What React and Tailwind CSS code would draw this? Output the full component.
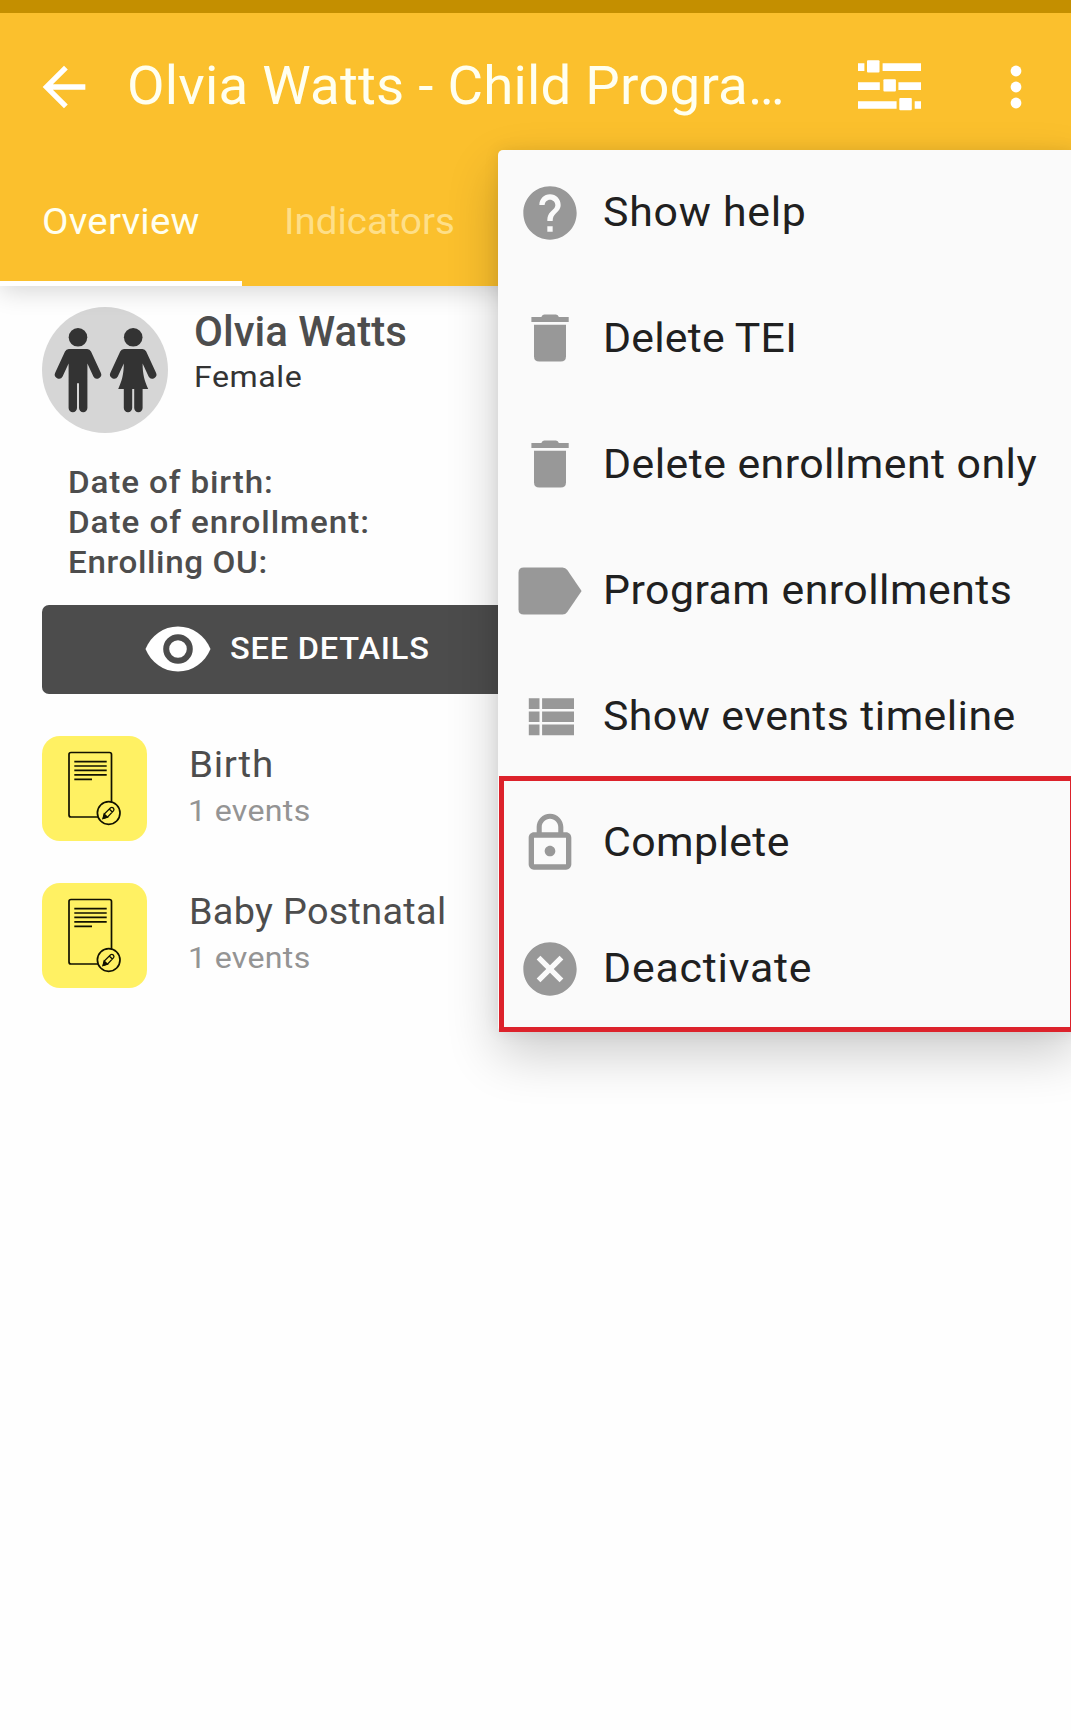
function BackIcon() {
  return (
    <svg viewBox="0 0 24 24" className="size-16 fill-white">
      <path d="M20 11H7.83l5.59-5.59L12 4l-8 8 8 8 1.41-1.41L7.83 13H20v-2z" />
    </svg>
  );
}

function TuneIcon() {
  return (
    <svg viewBox="0 0 63 51" className="h-[51px] w-[63px] fill-white">
      <path d="M0 3.3h6.4V11H0zM24.6 3.3H63V11H24.6zM0 22.3h21.8V30H0zM40.4 22.3H63V30H40.4zM0 41.2h38.6v7.6H0zM56.7 41.2H63v7.6h-6.3z" />
      <rect x="9" y="0.2" width="12.5" height="12.2" rx="1" />
      <rect x="25.4" y="19.2" width="12.5" height="12.2" rx="1" />
      <rect x="41.3" y="38.1" width="12.5" height="12.2" rx="1" />
    </svg>
  );
}

function MoreIcon() {
  return (
    <svg viewBox="0 0 64 64" className="size-16 fill-white">
      <circle cx="32" cy="16" r="5.4" />
      <circle cx="32" cy="32" r="5.4" />
      <circle cx="32" cy="48" r="5.4" />
    </svg>
  );
}

function PeopleIcon() {
  return (
    <svg viewBox="0 0 126 126" className="size-[126px] shrink-0 fill-[#333333]">
      <circle cx="63" cy="63" r="63" className="fill-[#d6d6d6]" />
      <circle cx="36" cy="30.3" r="9.3" />
      <path d="M26.8 42H45.2Q47.8 42 49 44.5L58.7 65.6A4.1 4.1 0 0 1 51.4 69.4L45.4 56.5V101A4.1 4.1 0 0 1 37 101V76.3H35V101A4.1 4.1 0 0 1 26.6 101V56.5L20.6 69.4A4.1 4.1 0 0 1 13.3 65.6L23 44.5Q24.2 42 26.8 42Z" />
      <circle cx="91.2" cy="30.3" r="9.3" />
      <path d="M82 42H100.4Q103 42 104.2 44.5L113.9 65.6A4.1 4.1 0 0 1 106.6 69.4L100.6 56.5C100.6 67 102.5 74 106.2 82H100.6V101A4.1 4.1 0 0 1 92.2 101V82H90.2V101A4.1 4.1 0 0 1 81.8 101V82H76.2C79.9 74 81.8 67 81.8 56.5L75.8 69.4A4.1 4.1 0 0 1 68.5 65.6L78.2 44.5Q79.4 42 82 42Z" />
    </svg>
  );
}

function EyeIcon() {
  return (
    <svg viewBox="0 0 66 46" className="h-[46px] w-[66px] shrink-0">
      <path d="M0.5 23C6 9.5 18.5 0.5 33 0.5S60 9.5 65.5 23C60 36.5 47.5 45.5 33 45.5S6 36.5 0.5 23Z" fill="#fff" />
      <circle cx="33" cy="23" r="11.8" fill="#fff" stroke="#4c4c4c" strokeWidth="6" />
    </svg>
  );
}

function DocIcon() {
  return (
    <svg viewBox="0 0 105 105" className="size-[105px]" fill="none" stroke="#111100" strokeWidth="1.7">
      <rect x="27" y="16.5" width="42.5" height="64.5" rx="2" />
      <path d="M32.3 25.7H64.7M32.3 30H64.7M32.3 34.4H64.7M32.3 38.8H64.7M32.3 43.3H50" />
      <circle cx="66.7" cy="77" r="11.3" className="fill-[#fff163]" />
      <path d="M61.3 82.3L62.5 77.8L68.6 71.7Q70 70.8 71.3 72Q72.5 73.3 71.6 74.7L65.7 80.9ZM67.3 73L70.3 76" strokeWidth="1.3" />
      <path d="M61.3 82.3L62.3 78.5L65 81.2Z" fill="#111100" />
    </svg>
  );
}

function HelpIcon() {
  return (
    <svg viewBox="0 0 24 24" className="size-16 fill-[#989898]">
      <path d="M12 2C6.48 2 2 6.48 2 12s4.48 10 10 10 10-4.48 10-10S17.52 2 12 2zm1 17h-2v-2h2v2zm2.07-7.75l-.9.92C13.45 12.9 13 13.5 13 15h-2v-.5c0-1.1.45-2.1 1.17-2.83l1.24-1.26c.37-.36.59-.86.59-1.41 0-1.1-.9-2-2-2s-2 .9-2 2H8c0-2.21 1.79-4 4-4s4 1.79 4 4c0 .88-.36 1.68-.93 2.25z" />
    </svg>
  );
}

function TrashIcon() {
  return (
    <svg viewBox="0 0 64 64" className="size-16 fill-[#989898]">
      <path d="M13.4 15V9.9H23.3Q24.5 7.5 26.5 7.5H37.7Q39.7 7.5 40.9 9.9H50.7V15Z" />
      <path d="M16 17.7H48V49.2Q48 54.5 42.7 54.5H21.3Q16 54.5 16 49.2Z" />
    </svg>
  );
}

function LabelIcon() {
  return (
    <svg viewBox="0 0 64 64" className="size-16 fill-[#989898]">
      <path d="M5.8 8.5H44.5Q47.5 8.5 49.3 11L63.6 32L49.3 53Q47.5 55.5 44.5 55.5H5.8Q0.5 55.5 0.5 50.2V13.8Q0.5 8.5 5.8 8.5Z" />
    </svg>
  );
}

function ListIcon() {
  return (
    <svg viewBox="0 0 64 64" className="size-16 fill-[#989898]">
      <path d="M10.8 13.3h10.7v10.7H10.8zM10.8 26.4h10.7v10.7H10.8zM10.8 39.6h10.7v10.7H10.8zM24.1 13.3H56v10.7H24.1zM24.1 26.4H56v10.7H24.1zM24.1 39.6H56v10.7H24.1z" />
    </svg>
  );
}

function LockIcon() {
  return (
    <svg viewBox="0 0 24 24" className="size-16 fill-[#989898]">
      <path d="M12 17c1.1 0 2-.9 2-2s-.9-2-2-2-2 .9-2 2 .9 2 2 2zm6-9h-1V6c0-2.76-2.24-5-5-5S7 3.24 7 6v2H6c-1.1 0-2 .9-2 2v10c0 1.1.9 2 2 2h12c1.1 0 2-.9 2-2V10c0-1.1-.9-2-2-2zM8.9 6c0-1.71 1.39-3.1 3.1-3.1s3.1 1.39 3.1 3.1v2H8.9V6zM18 20H6V10h12v10z" />
    </svg>
  );
}

function CancelIcon() {
  return (
    <svg viewBox="0 0 24 24" className="size-16 fill-[#989898]">
      <path d="M12 2C6.47 2 2 6.47 2 12s4.47 10 10 10 10-4.47 10-10S17.53 2 12 2zm5 13.59L15.59 17 12 13.41 8.41 17 7 15.59 10.59 12 7 8.41 8.41 7 12 10.59 15.59 7 17 8.41 13.41 12 17 15.59z" />
    </svg>
  );
}

const menuItems = [
  { label: "Show help", Icon: HelpIcon, tracking: "tracking-[0.7px]" },
  { label: "Delete TEI", Icon: TrashIcon, tracking: "tracking-[0.2px]" },
  { label: "Delete enrollment only", Icon: TrashIcon, tracking: "tracking-[0.43px]" },
  { label: "Program enrollments", Icon: LabelIcon, tracking: "tracking-[0.45px]" },
  { label: "Show events timeline", Icon: ListIcon, tracking: "tracking-[0.41px]" },
  { label: "Complete", Icon: LockIcon, tracking: "tracking-[0.37px]" },
  { label: "Deactivate", Icon: CancelIcon, tracking: "tracking-[0.75px]" },
];

const stages = [
  { name: "Birth", style: "scale-x-[1.07] tracking-[0.7px]" },
  { name: "Baby Postnatal", style: "scale-x-[1.05] tracking-[0.3px]" },
];

function Header() {
  return (
    <header className="relative h-[286px] bg-[#fbc02d] text-[#fffff0] shadow-[0_5px_24px_rgba(0,0,0,0.16)]">
      <div className="h-[13px] bg-[#c48f00]" />
      <div className="flex h-[145px] items-center pl-8">
        <div className="mt-[2px]"><BackIcon /></div>
        <h1 className="ml-[31px] w-[731px] origin-left scale-x-[1.03] whitespace-nowrap text-[53px] leading-[60px] tracking-[0.23px]">
          Olvia Watts - Child Progra…
        </h1>
        <TuneIcon />
        <div className="ml-[63px] mt-[2px]"><MoreIcon /></div>
      </div>
      <nav className="flex h-32 text-[37px] leading-[127px]">
        <div className="w-[242px] border-b-[5px] border-white pl-[42px]">
          <span className="inline-block origin-left scale-x-[1.04] tracking-[0.2px]">Overview</span>
        </div>
        <div className="pl-[42px] text-[#fedf88]">
          <span className="inline-block origin-left scale-x-[1.04]">Indicators</span>
        </div>
      </nav>
    </header>
  );
}

function Menu() {
  return (
    <div className="absolute left-[498px] top-[150px] w-[579px] rounded-[5px] bg-[#fafafa] shadow-[0_22px_52px_rgba(0,0,0,0.2),0_0_16px_rgba(0,0,0,0.08)]">
      {menuItems.map(({ label, Icon, tracking }) => (
        <div key={label} className="flex h-[126px] items-center pl-5 first:pb-[1px]">
          <Icon />
          <span className={`ml-[21px] origin-left scale-x-[1.07] whitespace-nowrap text-[40px] leading-[48px] text-[#202020] ${tracking}`}>{label}</span>
        </div>
      ))}
      <div className="absolute left-[1px] top-[626px] h-[256px] w-[576px] border-[5px] border-[#dc222b]" />
    </div>
  );
}

export default function App() {
  return (
    <div className="relative h-[1730px] w-[1071px] overflow-hidden bg-[#fefefe] font-['Roboto',sans-serif]">
      <Header />
      <main className="px-[42px] pt-[21px]">
        <section className="flex">
          <PeopleIcon />
          <div className="ml-[26px] pt-[2px]">
            <h2 className="text-[42px] font-medium leading-[46px] text-[#4d4d4d]">Olvia Watts</h2>
            <p className="origin-left scale-x-[1.07] text-[30px] leading-[44px] tracking-[0.52px] text-[#333333]">Female</p>
          </div>
        </section>
        <section className="mt-[30px] pl-[26px] text-[31px] font-medium leading-[40px] text-[#4d4d4d]">
          <p className="origin-left scale-x-[1.07] tracking-[0.83px]">Date of birth:</p>
          <p className="origin-left scale-x-[1.07] tracking-[0.9px]">Date of enrollment:</p>
          <p className="origin-left scale-x-[1.07] tracking-[0.6px]">Enrolling OU:</p>
        </section>
        <button className="mt-[22px] flex h-[89px] w-full items-center rounded-[7px] bg-[#4c4c4c] pl-[103px] text-white">
          <div className="-mt-[1px]"><EyeIcon /></div>
          <span className="ml-[19px] origin-left scale-x-[1.05] text-[31px] font-medium tracking-[0.75px]">SEE DETAILS</span>
        </button>
        <section className="mt-[42px] flex flex-col gap-[42px]">
          {stages.map((s) => (
            <div key={s.name} className="flex h-[105px] items-center">
              <div className="rounded-[18px] bg-[#fff163]"><DocIcon /></div>
              <div className="-mt-[2px] ml-[41px]">
                <p className={`ml-[1px] origin-left text-[36px] leading-[45px] text-[#4d4d4d] ${s.style}`}>{s.name}</p>
                <p className="origin-left scale-x-[1.07] text-[30px] leading-[45px] tracking-[0.3px] text-[#949494]">1 events</p>
              </div>
            </div>
          ))}
        </section>
      </main>
      <Menu />
    </div>
  );
}
